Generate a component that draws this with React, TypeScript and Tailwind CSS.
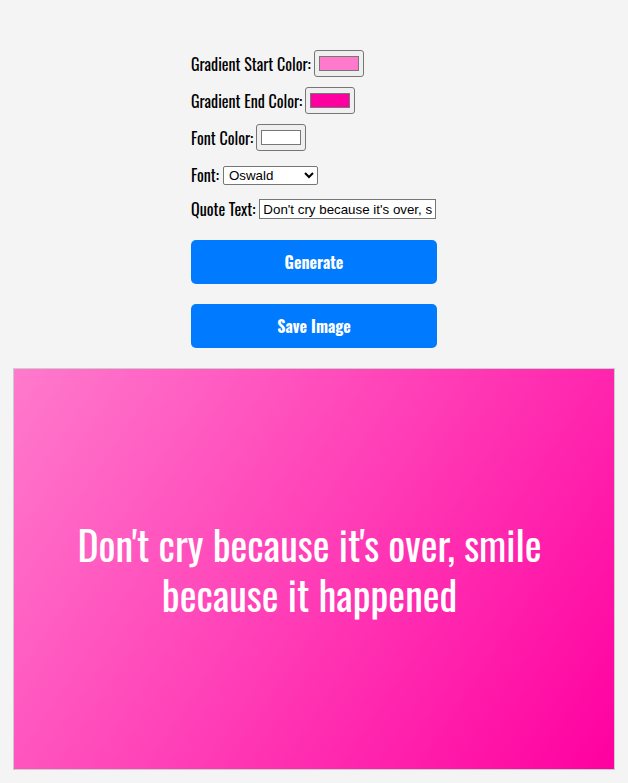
import React, { useState } from 'react';

const ColorSwatch: React.FC<{ color: string }> = ({ color }) => (
  <span className="inline-flex w-[50px] h-[27px] shrink-0 border border-[#767676] rounded-[3px] bg-[#efefef] px-[4px] py-[5px]">
    <span className="block w-full h-full border border-[#777777]" style={{ backgroundColor: color }} />
  </span>
);

export default function App() {
  const [startColor] = useState('#ff7acc');
  const [endColor] = useState('#ff00a0');
  const [fontColor] = useState('#ffffff');
  const [quote, setQuote] = useState("Don't cry because it's over, smile because it happened");

  return (
    <div className="min-h-screen bg-[#f4f4f4] font-['Oswald',sans-serif] text-black pt-[50px] pb-[13px]">
      <div className="w-[246px] mx-auto flex flex-col text-[16px]">
        <div className="flex items-center gap-[3px] h-[27px] mb-[10px]">
          <span>Gradient Start Color:</span>
          <ColorSwatch color={startColor} />
        </div>
        <div className="flex items-center gap-[3px] h-[27px] mb-[10px]">
          <span>Gradient End Color:</span>
          <ColorSwatch color={endColor} />
        </div>
        <div className="flex items-center gap-[3px] h-[27px] mb-[12px]">
          <span>Font Color:</span>
          <ColorSwatch color={fontColor} />
        </div>
        <div className="flex items-center gap-[4px] h-[24px] mb-[10px]">
          <span>Font:</span>
          <select
            defaultValue="Oswald"
            className="w-[95px] h-[19px] border border-[#767676] rounded-[2px] bg-white text-[13.33px] font-['Liberation_Sans',Arial,sans-serif] px-[1px]"
          >
            <option>Oswald</option>
            <option>Roboto</option>
            <option>Lato</option>
          </select>
        </div>
        <div className="flex items-center gap-[4px] h-[24px]">
          <span className="whitespace-nowrap">Quote Text:</span>
          <input
            type="text"
            value={quote}
            onChange={(e) => setQuote(e.target.value)}
            className="w-[177px] h-[20px] border border-[#767676] bg-white text-[13.33px] font-['Liberation_Sans',Arial,sans-serif] px-[3px]"
          />
        </div>
        <button className="mt-[19px] h-[44px] w-full rounded-[5px] bg-[#007bff] text-white font-bold text-[16px]">
          Generate
        </button>
        <button className="mt-[20px] h-[44px] w-full rounded-[5px] bg-[#007bff] text-white font-bold text-[16px]">
          Save Image
        </button>
      </div>
      <div className="mt-[20px] mx-auto w-[602px] h-[402px] border border-[#cccccc] bg-[linear-gradient(123.69deg,#ff7acc,#ff00a0)] flex items-center justify-center">
        <p className="max-w-[510px] text-center text-white text-[40px] leading-[50px] pr-[9px]" style={{ color: fontColor }}>
          {quote}
        </p>
      </div>
    </div>
  );
}
